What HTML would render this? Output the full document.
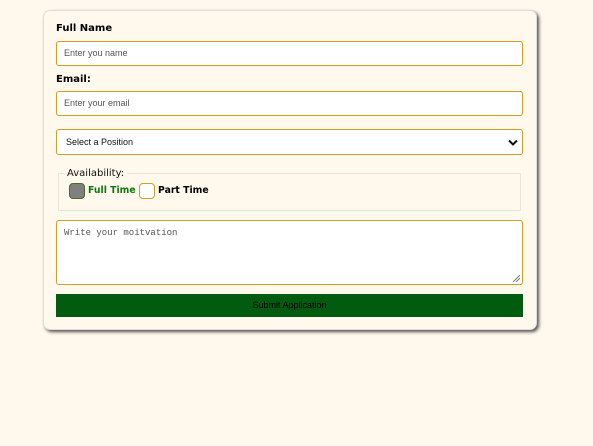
<!DOCTYPE html>
<html><head><style>
body{margin:0;background:#fff8ec;font-family:"Liberation Sans",Arial,sans-serif;width:593px;height:446px;position:relative;overflow:hidden}
.card{position:absolute;left:43px;top:10px;width:492px;height:318px;border:1px solid #ddd;border-radius:7px;background:#fff8ec;box-shadow:2px 2px 3px #555}
.l{position:absolute;left:56px;font-size:10px;font-weight:bold;color:#000;font-family:"DejaVu Sans",sans-serif}
.in{position:absolute;left:56px;width:467px;background:#fff;border:1px solid #d89a22;border-radius:3px;font-size:9px;color:#555;box-sizing:border-box;padding-left:7px}
.fs{position:absolute;left:58px;top:173px;width:463px;height:38px;border:1px solid #e8e4dc;box-sizing:border-box}
.cb{position:absolute;top:183px;width:16px;height:16px;border-radius:4px;box-sizing:border-box}
</style></head><body>
<div class="card"></div>
<div class="l" style="top:23px">Full Name</div>
<div class="in" style="top:41px;height:25px;line-height:23px">Enter you name</div>
<div class="l" style="top:74px">Email:</div>
<div class="in" style="top:91px;height:25px;line-height:23px">Enter your email</div>
<div class="in" style="top:129px;height:26px;line-height:24px;color:#111;padding-left:9px">Select a Position
<svg style="position:absolute;right:4px;top:9px" width="10" height="7" viewBox="0 0 10 7"><path d="M1 1.5L5 5.5L9 1.5" stroke="#111" stroke-width="2" fill="none"/></svg></div>
<div class="fs"></div>
<div style="position:absolute;left:64px;top:168px;background:#fff8ec;padding:0 3px;font-size:10px;color:#111;font-family:'DejaVu Sans',sans-serif">Availability:</div>
<div class="cb" style="left:69px;background:#808080;border:1px solid #4a6a2a"></div>
<div style="position:absolute;left:88px;top:185px;font-size:9.3px;font-weight:bold;color:#0a7a0a;font-family:'DejaVu Sans',sans-serif">Full Time</div>
<div class="cb" style="left:139px;background:#fff;border:1px solid #d89a22"></div>
<div style="position:absolute;left:158px;top:185px;font-size:9.3px;font-weight:bold;color:#000;font-family:'DejaVu Sans',sans-serif">Part Time</div>
<div class="in" style="top:220px;height:65px;font-family:'Liberation Mono',monospace;padding-top:7px;color:#555">Write your moitvation
<svg style="position:absolute;right:2px;bottom:2px" width="7" height="7"><path d="M0 7L7 0M3 7L7 3" stroke="#777" stroke-width="1"/></svg></div>
<div style="position:absolute;left:56px;top:294px;width:467px;height:23px;background:#035b10;color:#000;font-size:9px;text-align:center;line-height:23px">Submit Application</div>
</body></html>
